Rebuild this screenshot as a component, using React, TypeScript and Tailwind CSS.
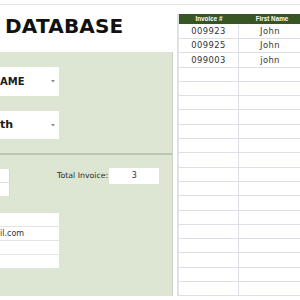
import React from 'react';

const rows = [
  { invoice: '009923', name: 'John' },
  { invoice: '009925', name: 'John' },
  { invoice: '099003', name: 'john' },
  ...Array.from({ length: 16 }, () => ({ invoice: '', name: '' })),
];

const Caret = () => (
  <svg width="4" height="3" viewBox="0 0 4 3" className="shrink-0">
    <path d="M0 0 L4 0 L2 2.5 Z" fill="#8a8a8a" />
  </svg>
);

export default function App() {
  return (
    <div className="w-[300px] h-[300px] overflow-hidden bg-white relative font-['DejaVu_Sans',sans-serif]">
      <div className="h-[4px]" />
      <div className="h-px bg-[#e2e3e5]" />
      <div className="flex">
        {/* left: form */}
        <div className="w-[173px] shrink-0">
          <div className="h-[47px] pl-[5px] pt-[9px]">
            <h1 className="text-[20px] font-bold leading-[24px] text-[#111] tracking-[0.2px]">DATABASE</h1>
          </div>
          <div className="h-[244px] bg-[#dce6d2] border-r border-[#c9d4c0] pt-[15px]">
            <div className="w-[59px] h-[29px] bg-white flex items-center justify-between pr-[4px]">
              <span className="text-[10px] font-bold text-[#1a1a1a]">AME</span>
              <Caret />
            </div>
            <div className="w-[59px] h-[28px] bg-white flex items-center justify-between pr-[4px] mt-[15px]">
              <span className="text-[11px] font-bold text-[#1a1a1a]">th</span>
              <Caret />
            </div>
            <div className="mt-[14px] h-[2px] bg-[#bcc6b4]" />
            <div className="mt-[13px] flex items-start">
              <div className="w-[10px] mt-px bg-white border-r border-[#d5d9cf]">
                <div className="h-[14px] border-b border-[#dfe2dc]" />
                <div className="h-[13px]" />
              </div>
              <span className="ml-[47px] mt-[3px] text-[7.8px] leading-[10px] text-[#2a2a2a]">Total Invoice:</span>
              <div className="ml-[1px] w-[50px] h-[16px] bg-white flex items-center justify-center text-[8px] font-medium text-[#333]">3</div>
            </div>
            <div className="mt-[16px] w-[60px] bg-white border border-l-0 border-[#e0e3dd]">
              <div className="h-[14px] border-b border-[#e2e4e0]" />
              <div className="h-[14px] border-b border-[#e2e4e0] flex items-center text-[8px] font-medium text-[#333]">il.com</div>
              <div className="h-[14px] border-b border-[#e2e4e0]" />
              <div className="h-[13px]" />
            </div>
          </div>
        </div>

        {/* right: table */}
        <div className="ml-[4px] pt-[9px] flex-1">
          <div className="border-l-2 border-[#dfe2e8] w-[130px]">
            <div className="flex h-[10px] bg-[#375623] text-white font-['Liberation_Sans',sans-serif] font-bold text-[6.3px]">
              <div className="w-[60px] flex items-center justify-center">Invoice #</div>
              <div className="flex-1 flex items-center justify-center pr-[2px]">First Name</div>
            </div>
            {rows.map((r, i) => (
              <div key={i} className={`flex ${i === 0 ? 'h-[15px] pt-px' : 'h-[14.3px]'} border-b border-[#dcdfe6] text-[8.4px] text-[#333] tracking-[0.4px]`}>
                <div className="w-[60px] border-r border-[#dcdfe6] flex items-center justify-center">{r.invoice}</div>
                <div className="flex-1 flex items-center justify-center pr-[6px]">{r.name}</div>
              </div>
            ))}
          </div>
        </div>
      </div>
    </div>
  );
}
